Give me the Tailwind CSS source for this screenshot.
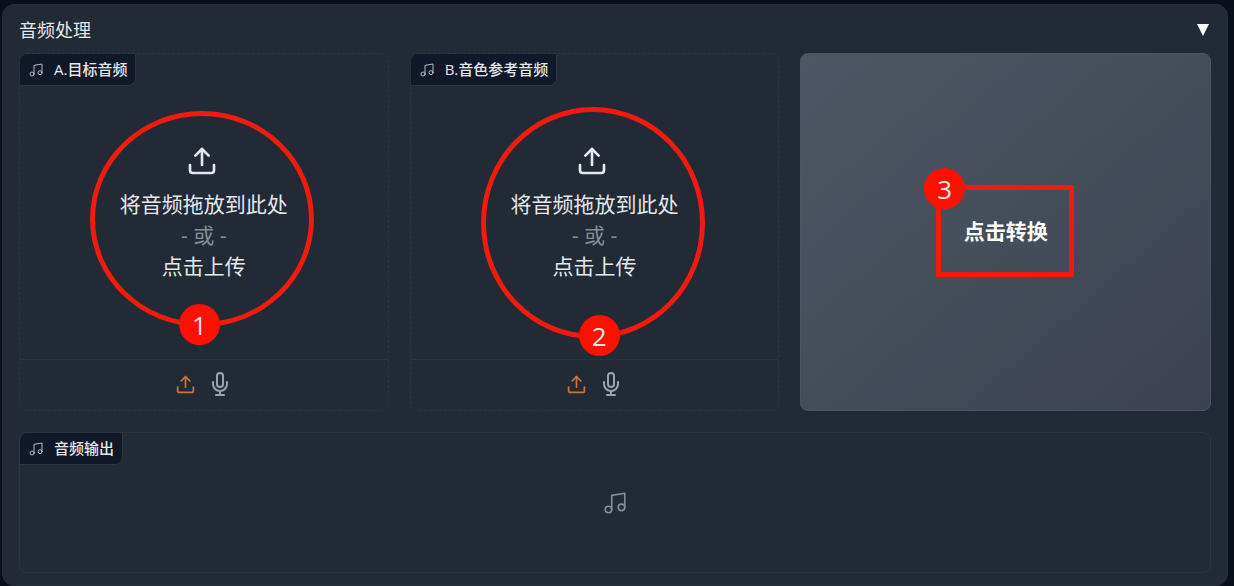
<!DOCTYPE html>
<html lang="zh-CN">
<head>
<meta charset="utf-8">
<meta name="viewport" content="width=device-width, initial-scale=1">
<title>音频处理</title>
<script src="https://cdn.jsdelivr.net/npm/@tailwindcss/browser@4"></script>
</head>
<body class="min-h-screen bg-[#0b0f19] pt-1 pr-1.5 pl-0.5 font-['Open_Sans','Noto_Sans_CJK_SC',sans-serif] text-[#e5e7eb]">
<svg class="hidden" aria-hidden="true">
  <symbol id="upload" viewBox="0 0 24 24" fill="none" stroke="currentColor" stroke-width="2" stroke-linecap="round" stroke-linejoin="round"><path d="M21 15v4a2 2 0 0 1-2 2H5a2 2 0 0 1-2-2v-4"/><path d="M17 8l-5-5-5 5"/><path d="M12 3v12"/></symbol>
  <symbol id="music" viewBox="0 0 24 24" fill="none" stroke="currentColor" stroke-width="1.5" stroke-linecap="round" stroke-linejoin="round"><path d="M9 18V5l12-2v13"/><circle cx="6" cy="18" r="3"/><circle cx="18" cy="16" r="3"/></symbol>
  <symbol id="mic" viewBox="0 0 24 24" fill="none" stroke="currentColor" stroke-width="2" stroke-linecap="round" stroke-linejoin="round"><path d="M12 1a3 3 0 0 0-3 3v8a3 3 0 0 0 6 0V4a3 3 0 0 0-3-3z"/><path d="M19 10v2a7 7 0 0 1-14 0v-2"/><path d="M12 19v4"/><path d="M8 23h8"/></symbol>
</svg>
<main class="rounded-xl border border-[#272d38] bg-[#212a35] px-4 pt-3 pb-3">
  <button type="button" aria-expanded="true" class="mb-2.5 flex w-full items-center justify-between pr-0.5 text-[18px] leading-[26px]">
    <span>音频处理</span>
    <svg class="size-3 text-white" viewBox="0 0 12 12" fill="currentColor" aria-hidden="true"><path d="M0 0h12L6 12z"/></svg>
  </button>

  <div class="grid grid-cols-[9fr_9fr_10fr] gap-[21px]">
    <section class="relative flex flex-col rounded-lg border border-dashed border-[#2b343f]">
      <h2 class="flex h-8 items-center gap-2.5 self-start rounded-tl-lg rounded-br-lg border-r border-b border-[#2b343f] bg-[#111827] px-2 text-[15px] font-medium"><svg class="size-4 text-[#b4bac4]"><use href="#music"/></svg>A.目标音频</h2>
      <button type="button" class="flex h-[273px] flex-col items-center pt-[59px] text-[21px] leading-[31px]">
        <svg class="mr-1 mb-3 size-8"><use href="#upload"/></svg>
        <span>将音频拖放到此处</span>
        <span class="text-[#868d99]">- 或 -</span>
        <span>点击上传</span>
      </button>
      <div class="flex h-[51px] items-center justify-center gap-3 border-t border-[#2b343f] pb-0.5">
        <button type="button" aria-label="上传文件" class="text-[#c9733f]"><svg class="size-[21px]"><use href="#upload"/></svg></button>
        <button type="button" aria-label="麦克风" class="text-[#9ca3af]"><svg class="size-6"><use href="#mic"/></svg></button>
      </div>
      <div class="pointer-events-none absolute top-[57px] left-[70px] h-[216px] w-[224px] rounded-[50%] border-[5px] border-[#ee1b0e]"></div>
      <div class="pointer-events-none absolute top-[250px] left-[159px] flex size-[41px] items-center justify-center rounded-full bg-[#ff1000] text-[26px] leading-none">1</div>
    </section>

    <section class="relative flex flex-col rounded-lg border border-dashed border-[#2b343f]">
      <h2 class="flex h-8 items-center gap-2.5 self-start rounded-tl-lg rounded-br-lg border-r border-b border-[#2b343f] bg-[#111827] px-2 text-[15px] font-medium"><svg class="size-4 text-[#b4bac4]"><use href="#music"/></svg>B.音色参考音频</h2>
      <button type="button" class="flex h-[273px] flex-col items-center pt-[59px] text-[21px] leading-[31px]">
        <svg class="mr-1 mb-3 size-8"><use href="#upload"/></svg>
        <span>将音频拖放到此处</span>
        <span class="text-[#868d99]">- 或 -</span>
        <span>点击上传</span>
      </button>
      <div class="flex h-[51px] items-center justify-center gap-3 border-t border-[#2b343f] pb-0.5">
        <button type="button" aria-label="上传文件" class="text-[#c9733f]"><svg class="size-[21px]"><use href="#upload"/></svg></button>
        <button type="button" aria-label="麦克风" class="text-[#9ca3af]"><svg class="size-6"><use href="#mic"/></svg></button>
      </div>
      <div class="pointer-events-none absolute top-[53px] left-[70px] h-[232px] w-[224px] rounded-[50%] border-[5px] border-[#ee1b0e]"></div>
      <div class="pointer-events-none absolute top-[261px] left-[168px] flex size-[41px] items-center justify-center rounded-full bg-[#ff1000] text-[26px] leading-none">2</div>
    </section>

    <div class="relative flex">
      <button type="button" class="flex-1 rounded-lg border border-[#4b5563] bg-linear-to-br from-[#4f5663] via-[#444e59] to-[#3d4050] text-[21px] font-bold text-white">点击转换</button>
      <div class="pointer-events-none absolute top-[132px] left-[136px] h-[92px] w-[138px] border-[5px] border-[#ee1b0e]"></div>
      <div class="pointer-events-none absolute top-[115px] left-[124px] flex size-[41px] items-center justify-center rounded-full bg-[#ff1000] text-[26px] leading-none">3</div>
    </div>
  </div>

  <section class="relative mt-[21px] flex h-[141px] items-center justify-center rounded-lg border border-[#2b343f]">
    <h2 class="absolute top-0 left-0 flex h-8 items-center gap-2.5 rounded-tl-lg rounded-br-lg border-r border-b border-[#2b343f] bg-[#111827] px-2 text-[15px] font-medium"><svg class="size-4 text-[#b4bac4]"><use href="#music"/></svg>音频输出</h2>
    <svg class="size-[26px] text-[#868d99]"><use href="#music"/></svg>
  </section>
</main>
</body>
</html>
